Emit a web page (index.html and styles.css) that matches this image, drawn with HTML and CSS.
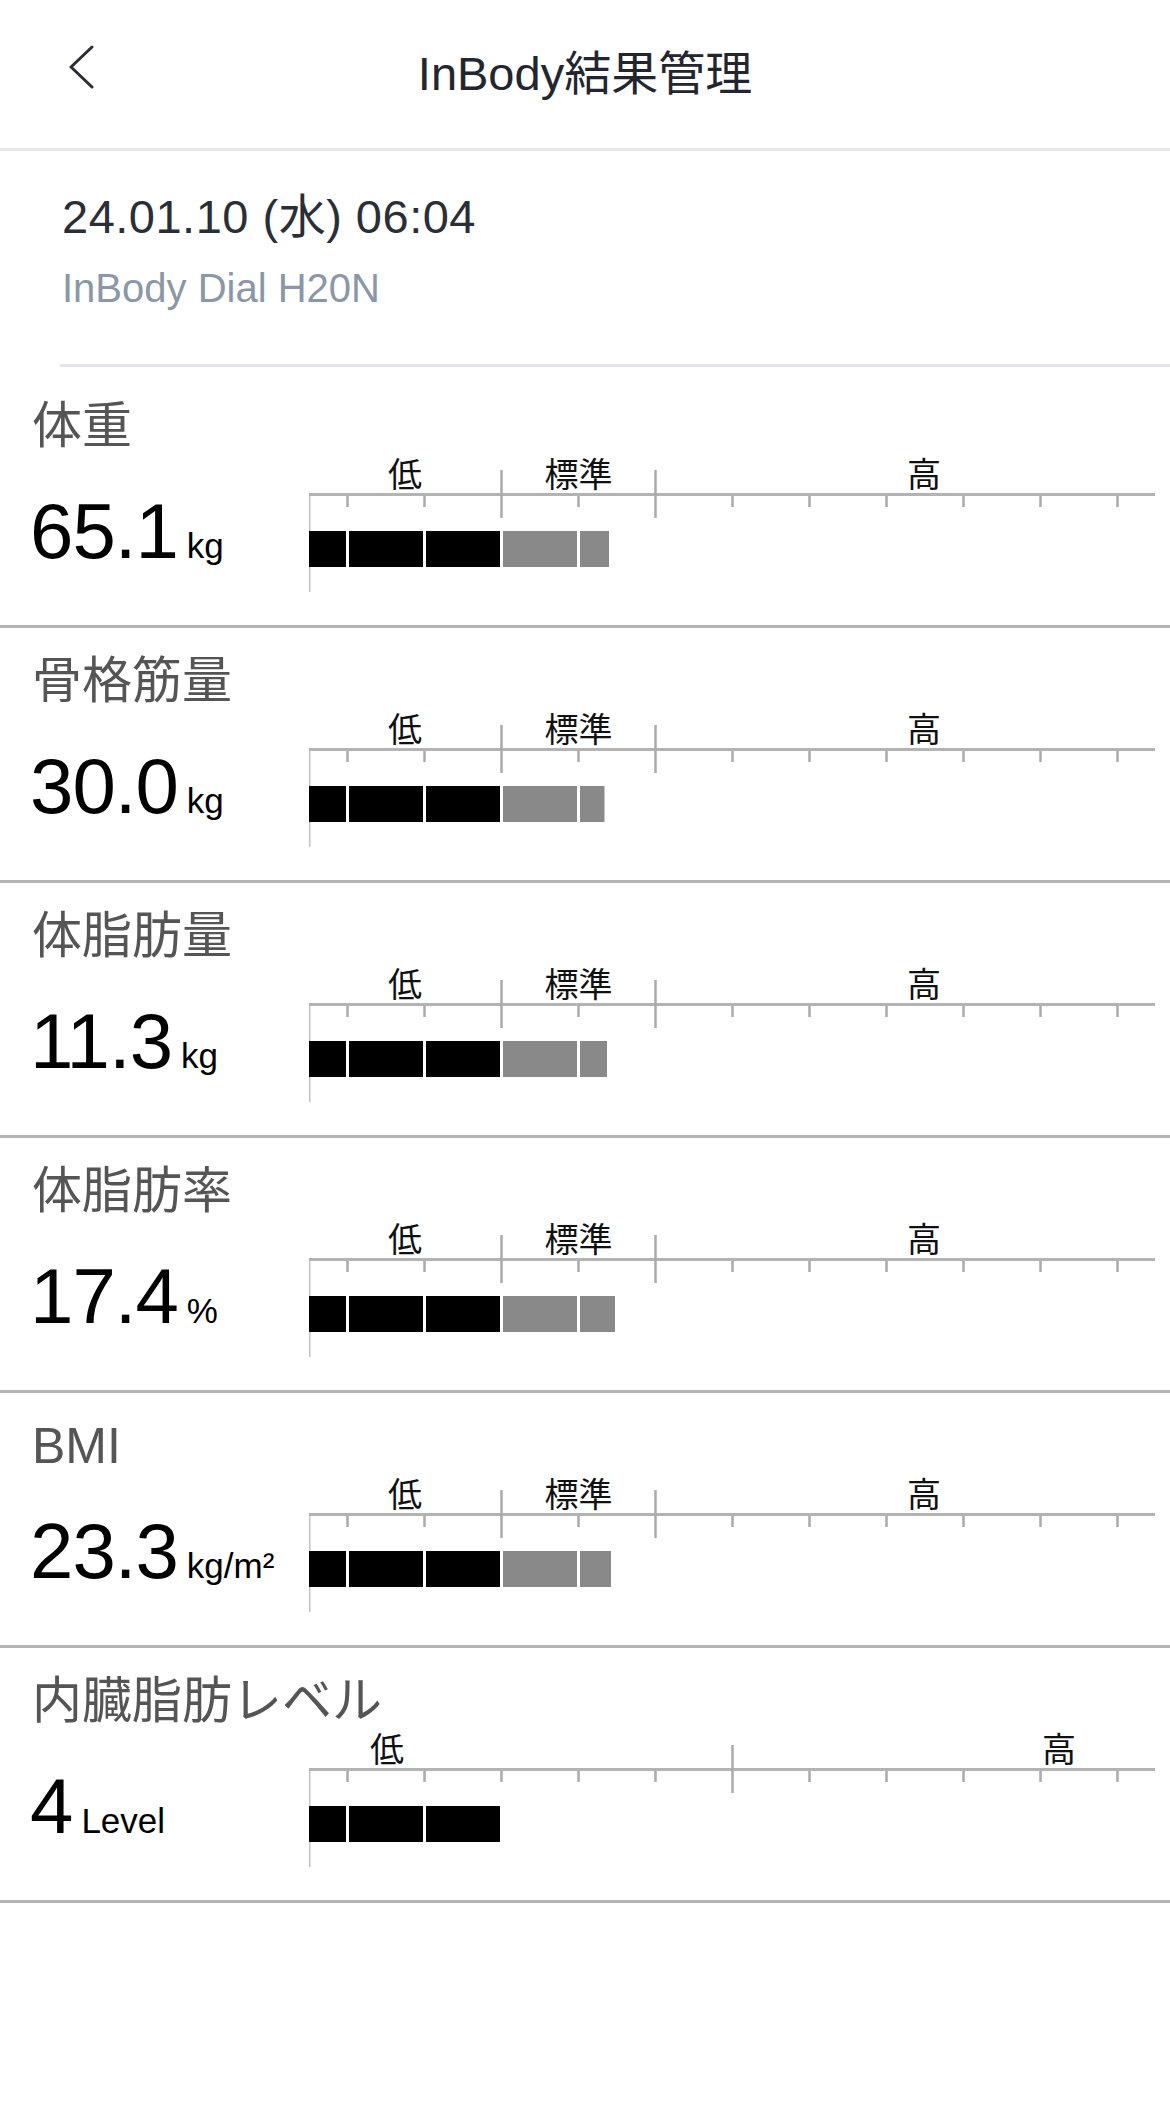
FILE: index.html
```html
<!DOCTYPE html>
<html lang="ja">
<head>
  <meta charset="UTF-8">
  <meta name="viewport" content="width=device-width, initial-scale=1">
  <title>InBody結果管理</title>
  <link rel="stylesheet" href="styles.css">
</head>
<body>
  <header class="topbar">
    <button class="back-btn" aria-label="戻る">
      <svg width="26" height="44" viewBox="0 0 26 44"><polyline points="24,2 3,22 24,42"/></svg>
    </button>
    <h1 class="title">InBody結果管理</h1>
    <span></span>
  </header>

  <div class="info">
    <div class="info-date">24.01.10 (水) 06:04</div>
    <div class="info-device">InBody Dial H20N</div>
  </div>

  <div class="metric">
    <div class="metric-name">体重</div>
    <div class="metric-body">
      <div class="metric-value"><span class="num">65.1</span><span class="unit">kg</span></div>
      <svg class="gauge" data-end="300"></svg>
    </div>
  </div>

  <div class="metric">
    <div class="metric-name">骨格筋量</div>
    <div class="metric-body">
      <div class="metric-value"><span class="num">30.0</span><span class="unit">kg</span></div>
      <svg class="gauge" data-end="295.5"></svg>
    </div>
  </div>

  <div class="metric">
    <div class="metric-name">体脂肪量</div>
    <div class="metric-body">
      <div class="metric-value"><span class="num">11.3</span><span class="unit">kg</span></div>
      <svg class="gauge" data-end="298"></svg>
    </div>
  </div>

  <div class="metric">
    <div class="metric-name">体脂肪率</div>
    <div class="metric-body">
      <div class="metric-value"><span class="num">17.4</span><span class="unit">%</span></div>
      <svg class="gauge" data-end="306"></svg>
    </div>
  </div>

  <div class="metric">
    <div class="metric-name">BMI</div>
    <div class="metric-body">
      <div class="metric-value"><span class="num">23.3</span><span class="unit">kg/m²</span></div>
      <svg class="gauge" data-end="302"></svg>
    </div>
  </div>

  <div class="metric">
    <div class="metric-name">内臓脂肪レベル</div>
    <div class="metric-body">
      <div class="metric-value"><span class="num">4</span><span class="unit">Level</span></div>
      <svg class="gauge" data-end="191" data-type="level"></svg>
    </div>
  </div>

  <script>
    // ゲージ: 目盛り 77px ごと、バーは目盛りの位置で区切る
    const CELL = 77;
    const RULER = 846;
    const TOP = 9;

    function drawGauge(svg) {
      const end = parseFloat(svg.dataset.end);
      const level = svg.dataset.type === 'level';
      const majors = level ? [5] : [2, 4];
      const labels = level
        ? [['低', 78], ['高', 750]]
        : [['低', 96], ['標準', 269.5], ['高', 615]];
      let html = '';

      labels.forEach(([t, x]) => {
        html += `<text class="gauge-label" x="${x}" y="${TOP + 32}" text-anchor="middle">${t}</text>`;
      });
      html += `<line class="axis" x1="0.75" y1="${TOP + 38}" x2="0.75" y2="${TOP + 137}"/>`;
      html += `<line class="ruler" x1="0" y1="${TOP + 39.5}" x2="${RULER}" y2="${TOP + 39.5}"/>`;

      for (let k = 0; k < 11; k++) {
        const x = CELL / 2 + CELL * k;
        if (majors.includes(k)) {
          html += `<line class="tick" x1="${x}" y1="${TOP + 15}" x2="${x}" y2="${TOP + 63}"/>`;
        } else {
          html += `<line class="tick" x1="${x}" y1="${TOP + 41}" x2="${x}" y2="${TOP + 52}"/>`;
        }
      }

      let start = 0;
      for (let k = 0; k <= 11 && start < end; k++) {
        const edge = k < 11 ? CELL / 2 + CELL * k : RULER;
        const x = k === 0 ? 0 : start + 1.5;
        const right = end >= edge - 0.5 ? edge - 1.5 : end;
        if (right > x) {
          const cls = edge <= 192.5 ? 'seg-low' : 'seg-mid';
          html += `<rect class="${cls}" x="${x}" y="${TOP + 76}" width="${right - x}" height="36"/>`;
        }
        start = edge;
      }

      svg.innerHTML = html;
    }

    document.querySelectorAll('.gauge').forEach(drawGauge);
  </script>
</body>
</html>
```

FILE: styles.css
```css
body {
  margin: 0;
  background-color: #ffffff;
  font-family: "Liberation Sans", "Noto Sans CJK JP", sans-serif;
}
.topbar {
  display: grid;
  grid-template-columns: 1fr auto 1fr;
  height: 148px;
  border-bottom: 3px solid #e3e6ea;
}
.back-btn {
  justify-self: start;
  margin: 45px 0 0 68px;
  padding: 0;
  border: 0;
  background: none;
  width: 26px;
  height: 44px;
}
.back-btn svg {
  display: block;
}
.back-btn polyline {
  fill: none;
  stroke: #2a2d35;
  stroke-width: 3;
  stroke-linecap: round;
  stroke-linejoin: round;
}
.title {
  margin: 0;
  align-self: center;
  font-size: 47px;
  font-weight: normal;
  line-height: 56px;
  color: #23262f;
}
.info {
  margin: 0 0 6px 60px;
  padding: 38px 0 52px 2px;
  border-bottom: 3px solid #e2e5e9;
}
.info-date {
  font-size: 47px;
  line-height: 56px;
  letter-spacing: 0.5px;
  color: #2a2e37;
}
.info-device {
  margin-top: 19px;
  font-size: 40px;
  line-height: 48px;
  color: #8a97a9;
}
.metric {
  height: 252px;
  border-bottom: 3px solid #b3b3b3;
}
.metric-name {
  padding: 33px 0 0 32px;
  font-size: 50px;
  line-height: 40px;
  color: #555555;
}
.metric-body {
  display: grid;
  grid-template-columns: 309px 1fr;
}
.metric-value {
  padding: 45px 0 0 30px;
  font-size: 78px;
  line-height: 80px;
  white-space: nowrap;
  color: #000000;
}
.num {
  letter-spacing: -1px;
}
.unit {
  margin-left: 9px;
  font-size: 35px;
}
.gauge {
  display: block;
  width: 861px;
  height: 179px;
  overflow: visible;
}
.gauge-label {
  font-family: "Noto Sans CJK JP", sans-serif;
  font-size: 34px;
  fill: #111111;
}
.axis {
  stroke: #c4c4c4;
  stroke-width: 1.5;
}
.ruler {
  stroke: #b3b3b3;
  stroke-width: 3;
}
.tick {
  stroke: #aaaaaa;
  stroke-width: 2.5;
}
.seg-low {
  fill: #000000;
}
.seg-mid {
  fill: #898989;
}
```
